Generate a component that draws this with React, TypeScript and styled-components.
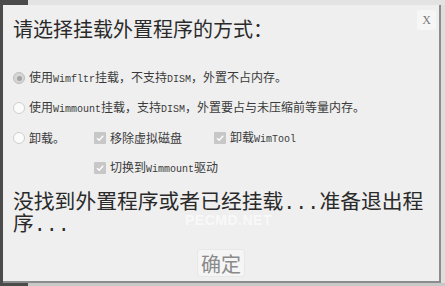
import React from "react";
import styled, { createGlobalStyle } from "styled-components";

const Global = createGlobalStyle`
  html, body { margin: 0; padding: 0; background: #4b4b4b; }
  body { width: 445px; height: 286px; overflow: hidden; }
`;

const Screen = styled.div`
  width: 445px;
  height: 286px;
  display: flex;
  flex-direction: column;
  background: #4b4b4b;
  font-family: "Noto Sans CJK SC", "Noto Sans", sans-serif;
`;

const Strip = styled.div<{ $h: number; $light: string }>`
  height: ${(p) => p.$h}px;
  display: flex;
  flex-shrink: 0;
  &::before { content: ""; width: 28px; background: #4b4b4b; }
  &::after { content: ""; flex: 1; background: ${(p) => p.$light}; }
`;

const Middle = styled.div`
  display: flex;
  height: 278px;
`;

const Gutter = styled.div<{ $w: number; $bg: string }>`
  width: ${(p) => p.$w}px;
  background: ${(p) => p.$bg};
  flex-shrink: 0;
`;

const Dialog = styled.div`
  position: relative;
  width: 438px;
  box-sizing: border-box;
  background: #efefef;
  border-right: 2px solid #8c8c8c;
  border-bottom: 2px solid #8c8c8c;
  padding: 0 10px 4px 10px;
  display: flex;
  flex-direction: column;
`;

const Title = styled.div`
  margin-top: 10px;
  height: 48px;
  font-size: 20px;
  line-height: 28px;
  color: #2a2a2a;
  white-space: nowrap;
`;

const Close = styled.div`
  position: absolute;
  top: 5px;
  right: 3px;
  width: 19px;
  height: 20px;
  border-radius: 3px;
  background: #f6f6f6;
  color: #7a7a7a;
  font-family: "Liberation Serif", serif;
  font-size: 12px;
  display: flex;
  align-items: center;
  justify-content: center;
`;

const Options = styled.div`
  display: grid;
  grid-template-columns: 81px 120px auto;
  grid-auto-rows: 30px;
  align-items: center;
  color: #3a3a3a;
  font-size: 12px;
`;

const Option = styled.div<{ $col?: number; $span?: number }>`
  display: flex;
  align-items: center;
  gap: 4px;
  white-space: nowrap;
  grid-column: ${(p) => (p.$col ? `${p.$col} / span ${p.$span || 1}` : "auto")};
  line-height: 14px;
`;

const Radio = styled.span<{ $checked?: boolean }>`
  width: 12px;
  height: 12px;
  box-sizing: border-box;
  border-radius: 50%;
  border: 1px solid ${(p) => (p.$checked ? "#bdbdbd" : "#cfcfcf")};
  background: ${(p) => (p.$checked ? "#d6d6d6" : "#fbfbfb")};
  display: flex;
  align-items: center;
  justify-content: center;
  flex-shrink: 0;
  &::after {
    content: "";
    width: 5px;
    height: 5px;
    border-radius: 50%;
    background: ${(p) => (p.$checked ? "#a3a3a3" : "transparent")};
  }
`;

const Check = styled.span`
  width: 12px;
  height: 12px;
  border-radius: 1px;
  background: #c7c7c7;
  display: flex;
  align-items: center;
  justify-content: center;
  flex-shrink: 0;
`;

const Latin = styled.span<{ $size?: number }>`
  font-family: "Liberation Mono", monospace;
  font-size: ${(p) => p.$size || 10}px;
`;

const Message = styled.div`
  margin-top: 8px;
  font-size: 20.8px;
  line-height: 19px;
  color: #2a2a2a;
`;

const Footer = styled.div`
  margin-top: auto;
  display: flex;
  justify-content: center;
`;

const OkButton = styled.div`
  width: 48px;
  height: 28px;
  box-sizing: border-box;
  border: 1px solid #e7e7e7;
  border-radius: 3px;
  background: #f5f5f5;
  color: #8a8a8a;
  font-size: 20px;
  display: flex;
  align-items: center;
  justify-content: center;
`;

const Watermark = styled.div`
  position: absolute;
  left: 182px;
  top: 208px;
  font-family: "Liberation Sans", sans-serif;
  font-weight: bold;
  font-size: 14px;
  line-height: 14px;
  color: rgba(255, 255, 255, 0.6);
  letter-spacing: 0.5px;
`;

const Tick = () => (
  <svg width="10" height="10" viewBox="0 0 10 10">
    <path d="M2 5.2 L4.2 7.3 L8.2 2.8" fill="none" stroke="#fff" strokeWidth="1.4" />
  </svg>
);

export default function App() {
  return (
    <Screen>
      <Global />
      <Strip $h={5} $light="#e3e3e3" />
      <Middle>
        <Gutter $w={3} $bg="#4b4b4b" />
        <Dialog>
          <Title>请选择挂载外置程序的方式：</Title>
          <Close>X</Close>
          <Options>
            <Option $col={1} $span={3}>
              <Radio $checked />
              <span>
                使用<Latin>Wimfltr</Latin>挂载，不支持<Latin>DISM</Latin>，外置不占内存。
              </span>
            </Option>
            <Option $col={1} $span={3}>
              <Radio />
              <span>
                使用<Latin>Wimmount</Latin>挂载，支持<Latin>DISM</Latin>，外置要占与未压缩前等量内存。
              </span>
            </Option>
            <Option $col={1}>
              <Radio />
              <span>卸载。</span>
            </Option>
            <Option $col={2}>
              <Check><Tick /></Check>
              <span>移除虚拟磁盘</span>
            </Option>
            <Option $col={3}>
              <Check><Tick /></Check>
              <span>
                卸载<Latin>WimTool</Latin>
              </span>
            </Option>
            <Option $col={2} $span={2}>
              <Check><Tick /></Check>
              <span>
                切换到<Latin>Wimmount</Latin>驱动
              </span>
            </Option>
          </Options>
          <Message>
            没找到外置程序或者已经挂载<Latin $size={20}>...</Latin>准备退出程序<Latin $size={20}>...</Latin>
          </Message>
          <Watermark>PECMD.NET</Watermark>
          <Footer>
            <OkButton>确定</OkButton>
          </Footer>
        </Dialog>
        <Gutter $w={4} $bg="#dedede" />
      </Middle>
      <Strip $h={3} $light="#c8c8c8" />
    </Screen>
  );
}
